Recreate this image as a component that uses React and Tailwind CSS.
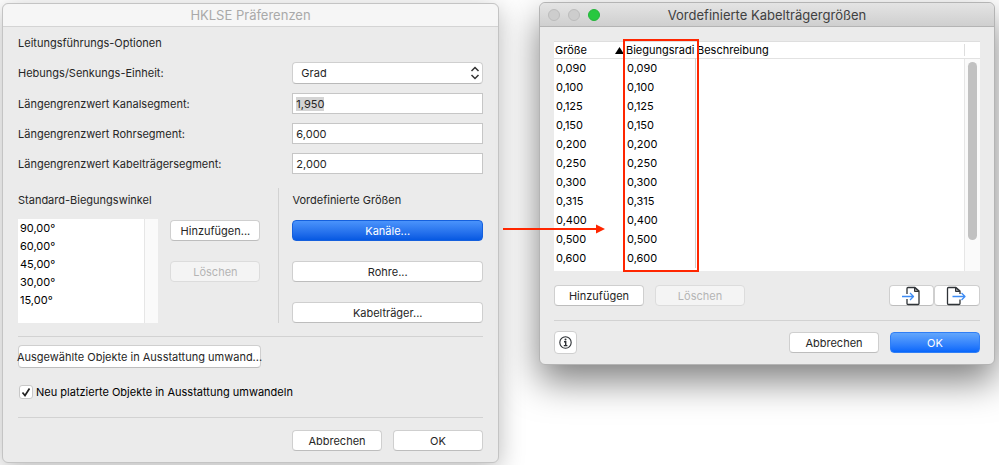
import { useEffect, useRef } from "react";

const ANGLES = ["90,00°", "60,00°", "45,00°", "30,00°", "15,00°"];

const SIZES = ["0,090", "0,100", "0,125", "0,150", "0,200", "0,250", "0,300", "0,315", "0,400", "0,500", "0,600"];

const BTN_STYLES = {
  default: "bg-white border-[#cfcfcf] border-b-[#bdbdbd] text-[#262626]",
  disabled: "bg-[#f4f4f4] border-[#dcdcdc] text-[#b4b4b4]",
  pressed: "bg-linear-to-b from-[#4a93fb] to-[#0558e2] border-[#1560dd] text-white",
  primary: "bg-linear-to-b from-[#62a6fc] to-[#0566fb] border-[#2f7ef5] text-white",
};

function Btn({ variant = "default", className = "h-[21px] w-[90px]", children, ...props }) {
  return (
    <button
      type="button"
      disabled={variant === "disabled"}
      className={`flex items-center justify-center rounded border whitespace-nowrap ${BTN_STYLES[variant]} ${className}`}
      {...props}
    >
      {children}
    </button>
  );
}

function Field({ id, label, children }) {
  return (
    <div className="flex items-center">
      <label htmlFor={id} className="flex-1">{label}</label>
      {children}
    </div>
  );
}

function TextField({ id, label, value, selected }) {
  const ref = useRef(null);

  useEffect(() => {
    if (selected) ref.current.select();
  }, [selected]);

  return (
    <Field id={id} label={label}>
      <input
        ref={ref}
        id={id}
        type="text"
        defaultValue={value}
        className="h-[21px] w-[41%] border border-[#c6c6c6] bg-white px-[3px] outline-none selection:bg-[#d4d4d4] selection:text-[#262626]"
      />
    </Field>
  );
}

function PageIcon({ out }) {
  return (
    <svg width="24" height="20" viewBox={out ? "2 0 24 20" : "0 0 24 20"} fill="none" strokeLinejoin="round">
      {out ? (
        <>
          <path d="M17 8V5L13 1.500H5.500Q4.500 1.500 4.500 2.500V17.500Q4.500 18.500 5.500 18.500H16Q17 18.500 17 17.500V13.500" stroke="#2f3337" strokeWidth="1.300" />
          <path d="M12.500 1.500V5.500H17Z" stroke="#2f3337" fill="#8a8d90" />
          <path d="M9.500 10.500H22M18.500 7L22 10.500L18.500 14" stroke="#3d8cf5" strokeWidth="1.300" />
        </>
      ) : (
        <>
          <path d="M7 8V2.500Q7 1.500 8 1.500H15L19 5V17.500Q19 18.500 18 18.500H8Q7 18.500 7 17.500V13" stroke="#2f3337" strokeWidth="1.300" />
          <path d="M14.500 1.500V5.500H19Z" stroke="#2f3337" fill="#8a8d90" />
          <path d="M2 10.500H13.500M10 7L13.500 10.500L10 14" stroke="#3d8cf5" strokeWidth="1.300" />
        </>
      )}
    </svg>
  );
}

function Arrow() {
  return (
    <svg width="102" height="12" viewBox="0 0 102 12" className="pointer-events-none absolute top-1 left-full z-10 ml-5">
      <path d="M0 5H94" stroke="#ff2600" strokeWidth="2" />
      <path d="M93 0.500L102 5L93 9.500Z" fill="#ff2600" />
    </svg>
  );
}

function PreferencesWindow() {
  return (
    <section className="rounded-md border border-[#c4c4c4] bg-[#ebebeb] shadow-[0_6px_26px_rgba(0,0,0,0.28)]">
      <h1 className="flex h-[23px] items-center justify-center rounded-t-md border-b border-[#d4d4d4] bg-[#f6f6f6] text-[13px] text-[#a9a9a9]">
        HKLSE Präferenzen
      </h1>
      <div className="px-[15px] pt-2 pb-[11px]">
        <h2>Leitungsführungs-Optionen</h2>

        <div className="mt-[11px] flex flex-col gap-[9px]">
          <Field id="unit" label="Hebungs/Senkungs-Einheit:">
            <div className="relative w-[41%]">
              <select id="unit" className="block h-[22px] w-full appearance-none rounded border border-[#cfcfcf] border-b-[#b9b9b9] bg-white px-2">
                <option>Grad</option>
              </select>
              <svg width="10" height="14" viewBox="0 0 10 14" fill="none" stroke="#333" strokeWidth="1.500" className="pointer-events-none absolute top-1 right-[3px]">
                <path d="M1.500 5L5 1.500L8.500 5M1.500 9L5 12.500L8.500 9" />
              </svg>
            </div>
          </Field>
          <TextField id="duct" label="Längengrenzwert Kanalsegment:" value="1,950" selected />
          <TextField id="pipe" label="Längengrenzwert Rohrsegment:" value="6,000" />
          <TextField id="tray" label="Längengrenzwert Kabelträgersegment:" value="2,000" />
        </div>

        <div className="mt-3.5 flex border-b border-[#d2d2d2] pb-[13px]">
          <div className="flex-1 pt-1">
            <h2>Standard-Biegungswinkel</h2>
            <div className="mt-[11px] flex gap-3 pr-[18px]">
              <div className="flex h-[104px] flex-1 bg-white">
                <ul className="flex-1 px-0.5 leading-[18px] text-black">
                  {ANGLES.map((a) => (
                    <li key={a}>{a}</li>
                  ))}
                </ul>
                <div className="w-3.5 border-l border-[#e6e6e6] bg-[#fafafa]" />
              </div>
              <div className="flex flex-col gap-5 pt-px">
                <Btn>Hinzufügen...</Btn>
                <Btn variant="disabled">Löschen</Btn>
              </div>
            </div>
          </div>
          <div className="w-[44%] border-l border-[#d2d2d2] pt-1 pl-[13px]">
            <h2>Vordefinierte Größen</h2>
            <div className="mt-3 flex flex-col gap-5">
              <div className="relative">
                <Btn variant="pressed" className="h-[21px] w-full">Kanäle...</Btn>
                <Arrow />
              </div>
              <Btn className="h-[21px] w-full">Rohre...</Btn>
              <Btn className="h-[21px] w-full">Kabelträger...</Btn>
            </div>
          </div>
        </div>

        <div className="border-b border-[#d2d2d2] pt-2 pb-[17px]">
          <Btn className="h-[23px] w-[243px]">Ausgewählte Objekte in Ausstattung umwand...</Btn>
          <label className="mt-4 flex items-center gap-[3px] text-black">
            <span className="relative ml-px size-3.5">
              <input type="checkbox" defaultChecked className="block size-3.5 appearance-none rounded-[3px] border border-[#c8c8c8] bg-white" />
              <svg width="14" height="14" viewBox="0 0 14 14" fill="none" stroke="#222" strokeWidth="1.700" className="pointer-events-none absolute top-0 left-0">
                <path d="M3.500 7.500L6 10.500L10.500 3.500" />
              </svg>
            </span>
            Neu platzierte Objekte in Ausstattung umwandeln
          </label>
        </div>

        <div className="mt-3 flex justify-end gap-[11px]">
          <Btn>Abbrechen</Btn>
          <Btn>OK</Btn>
        </div>
      </div>
    </section>
  );
}

function SizesWindow() {
  return (
    <section className="rounded-md border border-[#b4b4b4] bg-[#ebebeb] shadow-[0_16px_36px_rgba(0,0,0,0.5)]">
      <header className="relative flex h-6 items-center justify-center rounded-t-md border-b border-[#b4b4b4] bg-linear-to-b from-[#e4e4e4] to-[#cfcfcf]">
        <div className="absolute left-2 flex gap-2">
          <button type="button" aria-label="Schließen" className="size-3 rounded-full border border-[#bcbcbc] bg-[#cdcdcd]" />
          <button type="button" aria-label="Minimieren" className="size-3 rounded-full border border-[#bcbcbc] bg-[#cdcdcd]" />
          <button type="button" aria-label="Vergrößern" className="size-3 rounded-full border border-[#24b53a] bg-[#28c840]" />
        </div>
        <h1 className="text-[13px] text-[#404040]">Vordefinierte Kabelträgergrößen</h1>
      </header>

      <div className="px-3.5 pt-[14px] pb-2.5">
        <div className="relative flex h-[230px] border-t border-[#dedede] bg-white text-black">
          <div className="flex-1">
            <table className="w-full table-fixed border-collapse text-left">
              <thead>
                <tr className="border-b border-[#e2e2e2]">
                  <th className="w-[71px] p-0 font-normal">
                    <span className="flex items-center justify-between pr-px pl-px leading-4">
                      Größe
                      <svg width="9" height="7" viewBox="0 0 9 7">
                        <path d="M4.500 0L9 7H0Z" />
                      </svg>
                    </span>
                  </th>
                  <th className="w-[70px] overflow-hidden p-0 pl-px leading-4 font-normal whitespace-nowrap">Biegungsradi</th>
                  <th className="p-0 pl-0.5 leading-4 font-normal">Beschreibung</th>
                </tr>
              </thead>
              <tbody className="leading-[19px]">
                {SIZES.map((s) => (
                  <tr key={s}>
                    <td className="p-0 pl-0.5">{s}</td>
                    <td className="border-r border-[#cfcfcf] p-0 pl-0.5">{s}</td>
                    <td className="p-0" />
                  </tr>
                ))}
              </tbody>
            </table>
          </div>
          <div className="flex w-4 flex-col">
            <div className="h-[17px] border-b border-[#e2e2e2] py-0.5">
              <div className="h-full border-l border-[#dedede]" />
            </div>
            <div className="flex-1 border-l border-[#e6e6e6] bg-[#fafafa] pt-[3px] pl-[3px]">
              <div className="h-[85%] w-[9px] rounded-full bg-[#c1c1c1]" />
            </div>
          </div>
          <div className="pointer-events-none absolute -top-[3px] -bottom-px left-[69px] w-[76px] border-2 border-[#ff2600]" />
        </div>

        <div className="mt-3.5 flex border-b border-[#d2d2d2] pb-3.5">
          <div className="flex flex-1 gap-[11px]">
            <Btn>Hinzufügen</Btn>
            <Btn variant="disabled">Löschen</Btn>
          </div>
          <Btn className="h-[21px] w-[45px]" aria-label="Importieren"><PageIcon /></Btn>
          <Btn className="h-[21px] w-[46px]" aria-label="Exportieren"><PageIcon out /></Btn>
        </div>

        <div className="mt-2.5 flex items-center gap-[11px]">
          <button type="button" aria-label="Info" className="mr-auto flex size-[23px] items-center justify-center rounded border border-[#cfcfcf] bg-white">
            <svg width="13" height="13" viewBox="0 0 13 13" fill="none" stroke="#2b2f33">
              <circle cx="6.500" cy="6.500" r="5.700" strokeWidth="1.100" />
              <path d="M5 5.700H6.700V9.500M4.800 9.600H8.400" strokeWidth="1.400" />
              <circle cx="6.500" cy="3.500" r="1" fill="#2b2f33" stroke="none" />
            </svg>
          </button>
          <Btn>Abbrechen</Btn>
          <Btn variant="primary">OK</Btn>
        </div>
      </div>
    </section>
  );
}

export default function App() {
  return (
    <main className="grid grid-cols-[497fr_456fr] items-start gap-10 overflow-hidden bg-white pt-0.5 pr-1 pb-[3px] pl-0.5 font-['Inter',sans-serif] text-[11px] leading-4 text-[#262626]">
      <div className="pt-px">
        <PreferencesWindow />
      </div>
      <SizesWindow />
    </main>
  );
}
